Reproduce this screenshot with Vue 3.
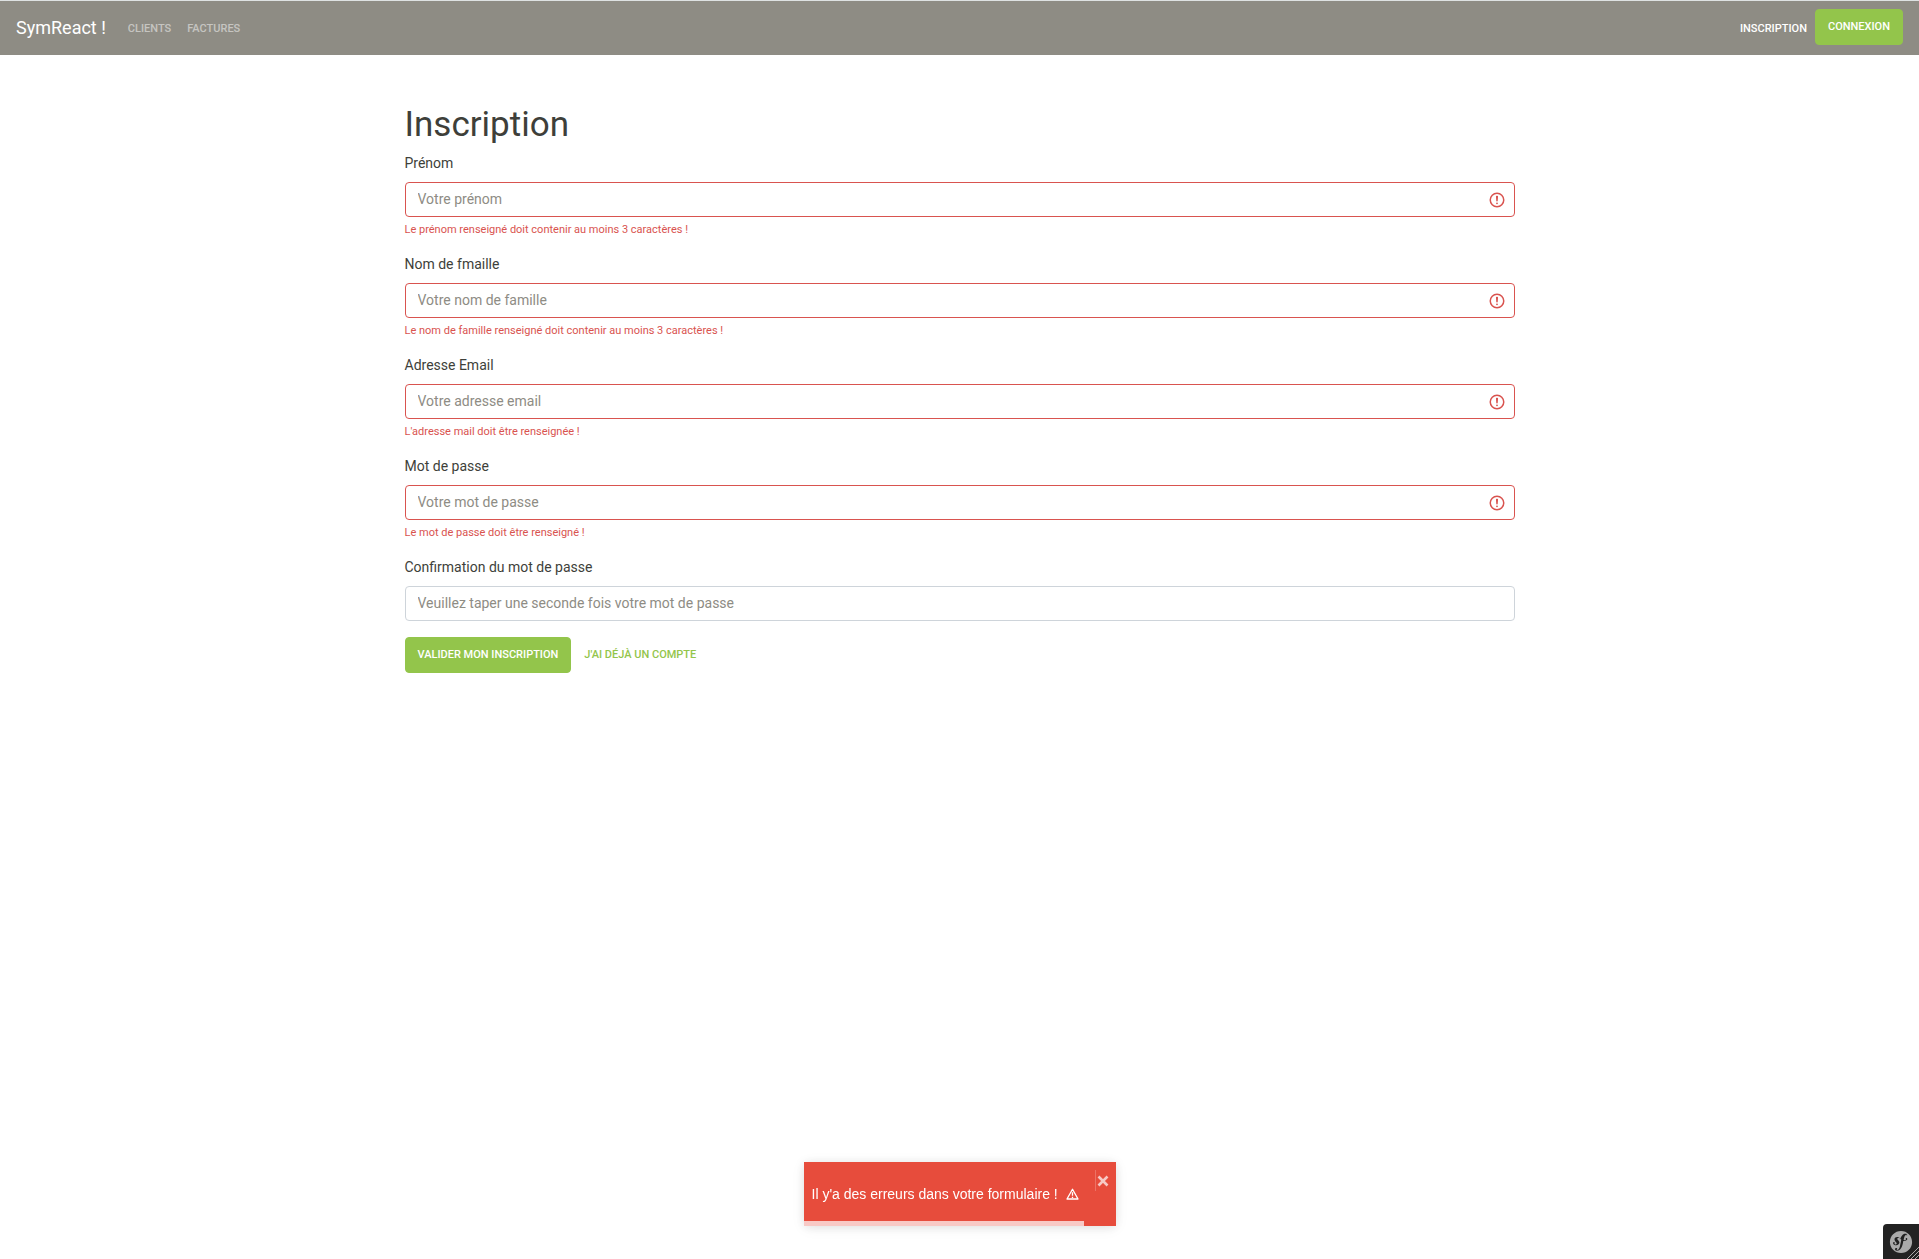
<script setup>
import { reactive, ref } from 'vue'

const links = ['Clients', 'Factures']

const fields = [
  { id: 'firstName', label: 'Prénom', type: 'text', placeholder: 'Votre prénom', error: 'Le prénom renseigné doit contenir au moins 3 caractères !' },
  { id: 'lastName', label: 'Nom de fmaille', type: 'text', placeholder: 'Votre nom de famille', error: 'Le nom de famille renseigné doit contenir au moins 3 caractères !' },
  { id: 'email', label: 'Adresse Email', type: 'email', placeholder: 'Votre adresse email', error: "L'adresse mail doit être renseignée !" },
  { id: 'password', label: 'Mot de passe', type: 'password', placeholder: 'Votre mot de passe', error: 'Le mot de passe doit être renseigné !' },
  { id: 'passwordConfirm', label: 'Confirmation du mot de passe', type: 'password', placeholder: 'Veuillez taper une seconde fois votre mot de passe', error: '' },
]

const user = reactive({ firstName: '', lastName: '', email: '', password: '', passwordConfirm: '' })
const toastOpen = ref(true)
const progress = ref(90)
</script>

<template>
  <nav class="navbar">
    <a class="brand" href="#">SymReact !</a>
    <ul class="nav-list">
      <li v-for="link in links" :key="link"><a class="nav-link" href="#">{{ link }}</a></li>
    </ul>
    <ul class="nav-list nav-end">
      <li><a class="nav-link active" href="#">Inscription</a></li>
      <li><a class="btn btn-success" href="#">Connexion</a></li>
    </ul>
  </nav>

  <main class="container">
    <h1>Inscription</h1>
    <form novalidate @submit.prevent>
      <div v-for="field in fields" :key="field.id" class="form-group">
        <label :for="field.id">{{ field.label }}</label>
        <div class="control" :class="{ invalid: field.error }">
          <input :id="field.id" v-model="user[field.id]" :type="field.type" :placeholder="field.placeholder" />
          <svg v-if="field.error" class="error-icon" viewBox="0 0 12 12" fill="none" stroke="#d9534f" aria-hidden="true">
            <circle cx="6" cy="6" r="4.5" />
            <path stroke-linejoin="round" d="M5.8 3.6h.4L6 6.5z" />
            <circle cx="6" cy="8.2" r=".6" fill="#d9534f" stroke="none" />
          </svg>
        </div>
        <p v-if="field.error" class="feedback">{{ field.error }}</p>
      </div>
      <div class="actions">
        <button type="submit" class="btn btn-success">Valider mon inscription</button>
        <a class="btn btn-link" href="#">J'ai déjà un compte</a>
      </div>
    </form>
  </main>

  <div v-if="toastOpen" class="toast" role="alert">
    <div class="toast-body">
      Il y'a des erreurs dans votre formulaire !
      <svg class="warning" viewBox="0 0 13 12" fill="none" stroke="#fff" aria-hidden="true">
        <path d="M6.5 1.2L12 11H1z" stroke-width="1.3" stroke-linejoin="round" />
        <path d="M6.5 4.2v3.6M6.5 8.7v1.3" stroke-width="1.3" />
      </svg>
    </div>
    <button type="button" class="toast-close" aria-label="Fermer" @click="toastOpen = false">
      <svg viewBox="0 0 12 12" stroke="#fff" stroke-width="2.6" aria-hidden="true">
        <path d="M1.5 1.5l9 9M10.5 1.5l-9 9" />
      </svg>
    </button>
    <div class="toast-progress" :style="{ width: progress + '%' }"></div>
  </div>

  <button type="button" class="debug-toggle" aria-label="Symfony">
    <svg class="sf" viewBox="0 0 24 24" fill="#aaa" aria-hidden="true">
      <path d="M12 .9C5.8.9.9 5.8.9 12a11.1 11.1 0 1 0 22.2 0C23.1 5.8 18.2.9 12 .9zm6.5 6c-.6 0-.9-.3-.9-.8 0-.2 0-.4.2-.6l.2-.4c0-.3-.3-.4-.5-.4-1.8.1-2.3 2.5-2.7 4.4l-.2 1c1 .2 1.8 0 2.2-.3.6-.4-.2-.7-.1-1.2a.8.8 0 0 1 .8-.7c.5 0 .8.5.8 1 0 .9-1.2 2-3.3 2h-.7l-.4 2.3c-.4 1.6-.8 3.8-2.4 5.7-1.4 1.7-2.9 1.9-3.5 1.9-1.2 0-2-.6-2-1.5 0-.8.7-1.3 1.2-1.3.6 0 1.1.5 1.1 1s-.2.6-.4.6c-.1.1-.3.2-.3.4 0 .1.1.3.4.3.5 0 .9-.3 1.1-.5 1.4-1.1 1.8-2.9 2.4-6.2l.2-.8.6-3.2c-.8-.6-1.3-1.4-2.3-1.7-.7-.2-1.1 0-1.5.4-.4.5-.2 1.1.2 1.5l.7.7c.7.9 1.2 1.7.9 2.6-.3 1.5-2 2.7-4.2 2.1-1.8-.6-2.2-1.8-2-2.5.2-.6.6-.7 1.1-.6.5.2.7.7.5 1.2l-.1.2c-.1.1-.2.2-.2.3-.1.4.4.6.7.7.7.2 1.4-.1 1.6-.7.2-.5-.1-.9-.2-1.1l-.9-1c-.4-.5-1.4-1.7-1-3 .1-.4.4-.9.8-1.2.8-.6 1.8-.7 2.6-.4 1.1.3 1.6 1 2.3 1.6.4-1.2 1-2.4 1.8-3.3.8-.9 1.8-1.6 3-1.6 1.2-.1 2 .4 2.1 1.3 0 .3-.2 1.2-1 1.2z" />
    </svg>
    <svg class="stripes" viewBox="0 0 12 12" stroke="#aaa" stroke-width="1" aria-hidden="true">
      <path d="M0 12L12 0M4 12l8-8M8 12l4-4" />
    </svg>
  </button>
</template>

<style>
body {
  margin: 0;
  background: #fff;
}
</style>

<style scoped>
.navbar,
.container {
  box-sizing: border-box;
  font-family: Roboto, "Liberation Sans", sans-serif;
  font-size: 14px;
  line-height: 21px;
  color: #3e3f3a;
}

.navbar {
  display: flex;
  align-items: center;
  padding: 8px 16px 10px;
  background: #8e8c84;
  border-top: 1px solid #dee2e2;
}

a {
  text-decoration: none;
}

.brand {
  margin-right: 14px;
  font-size: 18px;
  line-height: 27px;
  color: #fff;
}

.nav-list {
  display: flex;
  align-items: center;
  margin: 0;
  padding: 0;
  list-style: none;
}

.nav-end {
  margin-left: auto;
}

.nav-link {
  display: block;
  padding: 10px 8px 6px;
  font-size: 11px;
  line-height: 20px;
  font-weight: 500;
  text-transform: uppercase;
  color: rgba(255, 255, 255, 0.5);
}

.nav-link.active {
  color: #fff;
}

.btn {
  display: block;
  box-sizing: border-box;
  padding: 8px 12px;
  border: 1px solid transparent;
  border-radius: 4px;
  font-family: inherit;
  font-size: 11px;
  line-height: 18px;
  font-weight: 500;
  text-transform: uppercase;
  cursor: pointer;
}

.btn-success {
  background: #93c54b;
  border-color: #93c54b;
  color: #fff;
}

.btn-link {
  color: #93c54b;
}

.container {
  max-width: 1140px;
  margin: 0 auto;
  padding: 48px 15px 0;
}

h1 {
  margin: 0 0 6px;
  font-size: 35px;
  line-height: 44px;
  font-weight: 400;
}

.form-group {
  margin-bottom: 16px;
}

label {
  display: block;
  margin-bottom: 8px;
}

.control {
  display: grid;
  align-items: center;
}

.control > * {
  grid-area: 1 / 1;
}

input {
  box-sizing: border-box;
  width: 100%;
  height: 35px;
  padding: 5px 12px 7px;
  border: 1px solid #ced4da;
  border-radius: 4px;
  background: #fff;
  font: inherit;
  color: #495057;
}

input::placeholder {
  color: #8e8c84;
  opacity: 1;
}

.invalid input {
  padding-right: 36px;
  border-color: #d9534f;
}

.error-icon {
  justify-self: end;
  width: 18px;
  height: 18px;
  margin-right: 9px;
  pointer-events: none;
}

.feedback {
  margin: 4px 0 0;
  font-size: 11px;
  line-height: 17px;
  color: #d9534f;
}

.actions {
  display: flex;
}

.toast {
  position: fixed;
  bottom: 33px;
  left: 50%;
  display: flex;
  align-items: flex-start;
  box-sizing: border-box;
  width: 312px;
  min-height: 64px;
  margin-left: -156px;
  padding: 8px 7px 8px 8px;
  background: #e74c3c;
  box-shadow: 0 1px 10px rgba(0, 0, 0, 0.1), 0 2px 15px rgba(0, 0, 0, 0.05);
  font-family: "Liberation Sans", Arial, sans-serif;
  font-size: 14px;
  line-height: 20px;
  color: #fff;
}

.toast-body {
  flex: 1;
  align-self: center;
  white-space: nowrap;
}

.warning {
  width: 13px;
  height: 12px;
  margin-left: 4px;
  vertical-align: -1px;
}

.toast-close {
  padding: 5px 0 4px 1px;
  border: 0;
  border-left: 1px solid rgba(255, 255, 255, 0.3);
  background: none;
  line-height: 0;
  opacity: 0.7;
  cursor: pointer;
}

.toast-close svg {
  width: 12px;
  height: 12px;
}

.toast-progress {
  position: absolute;
  bottom: 0;
  left: 0;
  height: 5px;
  background: rgba(255, 255, 255, 0.7);
}

.debug-toggle {
  position: fixed;
  right: 0;
  bottom: 0;
  width: 36px;
  height: 35px;
  padding: 6px;
  border: 0;
  border-radius: 4px 0 0 0;
  background: #222;
  line-height: 0;
  cursor: pointer;
}

.sf {
  width: 24px;
  height: 24px;
}

.stripes {
  position: absolute;
  right: 0;
  bottom: 0;
  width: 12px;
  height: 12px;
}
</style>
